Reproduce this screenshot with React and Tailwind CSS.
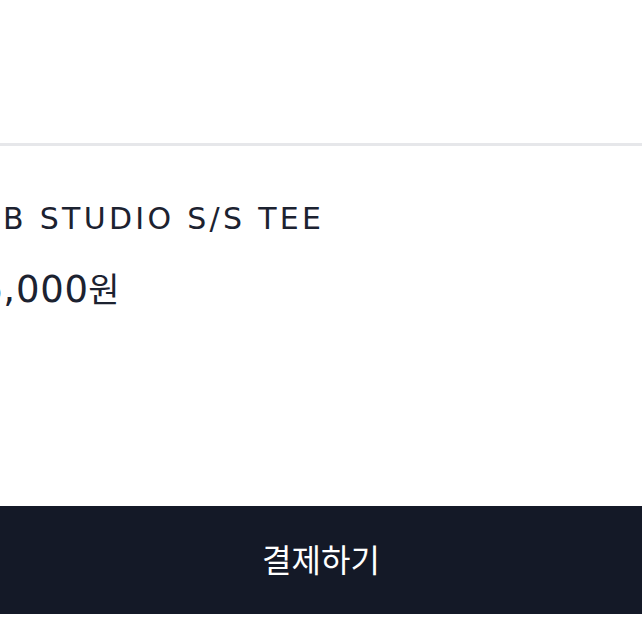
export default function App() {
  return (
    <div className="w-[642px] h-[642px] bg-white overflow-hidden flex flex-col" style={{ fontFamily: '"DejaVu Sans", "Noto Sans CJK KR", sans-serif' }}>
      <div className="h-[143px] shrink-0" />
      <div className="h-[3px] shrink-0 bg-[#e6e7ea]" />
      <div className="flex flex-col pt-[58px] text-[#1c2230]">
        <div className="pl-[3px] text-[30px] leading-[30px] tracking-[3.3px] whitespace-nowrap">B STUDIO S/S TEE</div>
        <div className="ml-[-21px] mt-[35px] text-[37px] leading-[37px] tracking-[0.8px] whitespace-nowrap">
          6,000<span className="ml-[-0.8px] text-[34px] tracking-normal" style={{ fontFamily: '"Noto Sans CJK KR", sans-serif' }}>원</span>
        </div>
      </div>
      <div className="flex-1" />
      <div className="h-[108px] shrink-0 bg-[#141927] flex items-center justify-center">
        <span className="text-white text-[32px] leading-none pb-[4px]" style={{ fontFamily: '"Noto Sans CJK KR", sans-serif' }}>결제하기</span>
      </div>
      <div className="h-[28px] shrink-0" />
    </div>
  );
}
